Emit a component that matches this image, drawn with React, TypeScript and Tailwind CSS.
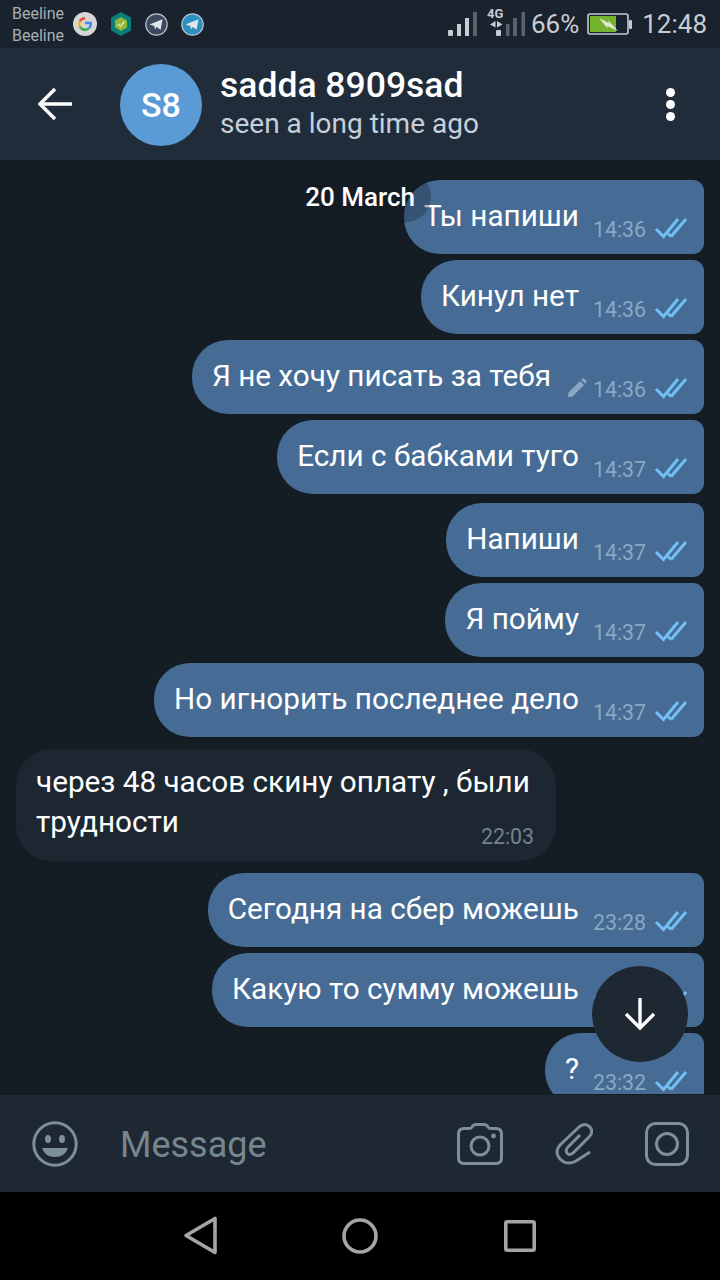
// App.tsx
import React from 'react';

const DoubleCheck = () => (
  <svg width="34" height="24" viewBox="0 0 34 24" fill="none" className="shrink-0">
    <path d="M2 14 L9.5 21.5 L24 4" stroke="#72c0f5" strokeWidth="3" />
    <path d="M17 21.5 L32 4" stroke="#72c0f5" strokeWidth="3" />
    <path d="M14 18.5 L17 21.5" stroke="#72c0f5" strokeWidth="3" />
  </svg>
);

const Pencil = () => (
  <svg width="20" height="20" viewBox="0 0 20 20" className="shrink-0">
    <path d="M1 19 L1.5 14.5 L13 3 L17 7 L5.5 18.5 Z M14.3 1.8 L15.4 0.8 Q16.3 0 17.2 0.8 L19.2 2.8 Q20 3.7 19.2 4.6 L18.2 5.7 Z" fill="#8ba7c4" />
  </svg>
);

const GoogleIcon = () => (
  <svg width="24" height="24" viewBox="0 0 24 24">
    <circle cx="12" cy="12" r="12" fill="#d6d6d4" />
    <path d="M12 6.2 A5.8 5.8 0 0 0 6.9 9.3" stroke="#e2483d" strokeWidth="2.4" fill="none" />
    <path d="M6.9 9.3 A5.8 5.8 0 0 0 6.9 14.7" stroke="#f2b705" strokeWidth="2.4" fill="none" />
    <path d="M6.9 14.7 A5.8 5.8 0 0 0 16.2 16" stroke="#3aa757" strokeWidth="2.4" fill="none" />
    <path d="M16.2 16 A5.8 5.8 0 0 0 17.8 11 H12" stroke="#4285f4" strokeWidth="2.4" fill="none" />
  </svg>
);

const ShieldIcon = () => (
  <svg width="22" height="24" viewBox="0 0 22 24">
    <path d="M11 0 L21 5.5 V18.5 L11 24 L1 18.5 V5.5 Z" fill="#0b7d78" />
    <path d="M11 5 L17 8.5 V15.5 L11 19 L5 15.5 V8.5 Z" fill="#8fb63c" />
    <path d="M8 12 L10.5 14.5 L14.5 9.5" stroke="#d8e6a0" strokeWidth="1.5" fill="none" />
  </svg>
);

const TelegramIcon = ({ fill }: { fill: string }) => (
  <svg width="23" height="23" viewBox="0 0 23 23">
    <circle cx="11.5" cy="11.5" r="10.7" fill={fill} stroke="#b9c5cf" strokeWidth="1.2" />
    <path d="M4.5 11.5 L17.5 6.2 L15.6 16.8 L11.6 14 L10 16.5 L9.3 13 Z" fill="#dfe5ea" />
  </svg>
);

const Signal = () => (
  <svg width="30" height="24" viewBox="0 0 30 24">
    <rect x="0" y="18" width="5" height="6" rx="1" fill="#c8ccd0" />
    <rect x="9" y="12" width="4" height="12" fill="#c8ccd0" />
    <rect x="17" y="6" width="4" height="18" fill="#c8ccd0" />
    <rect x="25" y="0" width="4" height="24" fill="#59636d" />
  </svg>
);

const Signal2 = () => (
  <svg width="38" height="32" viewBox="0 -4 38 32">
    <text x="0" y="10" fontFamily="Roboto, sans-serif" fontWeight="700" fontSize="13" fill="#c8ccd0">4G</text>
    <path d="M8.5 13 L3 16.5 L8.5 19.5 Z M10 13 V19.5 L15.5 16.5 Z" fill="#c8ccd0" />
    <rect x="9" y="22" width="5" height="6" rx="1" fill="#c8ccd0" />
    <rect x="19" y="16" width="3.5" height="12" fill="#59636d" />
    <rect x="26" y="10" width="4" height="18" fill="#59636d" />
    <rect x="34.5" y="4" width="3.5" height="24" fill="#59636d" />
  </svg>
);

const Battery = () => (
  <svg width="46" height="24" viewBox="0 0 46 24">
    <rect x="1" y="2" width="40" height="20" rx="2" fill="none" stroke="#c8ccd0" strokeWidth="1.6" />
    <rect x="3" y="4" width="26" height="16" fill="#74b32e" />
    <rect x="42" y="8" width="3" height="9" rx="1" fill="#c8ccd0" />
    <path d="M12 6 L22 11 L21 8 L31 19 L20 14 L21 17 Z" fill="#dfe5d5" />
  </svg>
);

interface Msg {
  text: string;
  time: string;
  top: string;
  edited?: boolean;
}

const messagesTop: Msg[] = [
  { text: 'Ты напиши', time: '14:36', top: 'mt-5' },
  { text: 'Кинул нет', time: '14:36', top: 'mt-[6px]' },
  { text: 'Я не хочу писать за тебя', time: '14:36', top: 'mt-[6px]', edited: true },
  { text: 'Если с бабками туго', time: '14:37', top: 'mt-[6px]' },
  { text: 'Напиши', time: '14:37', top: 'mt-[9px]' },
  { text: 'Я пойму', time: '14:37', top: 'mt-[6px]' },
  { text: 'Но игнорить последнее дело', time: '14:37', top: 'mt-[6px]' },
];

const messagesBottom: Msg[] = [
  { text: 'Сегодня на сбер можешь', time: '23:28', top: 'mt-3' },
  { text: 'Какую то сумму можешь', time: '23:29', top: 'mt-[6px]' },
  { text: '?', time: '23:32', top: 'mt-[6px]' },
];

const OutBubble = ({ msg }: { msg: Msg }) => (
  <div className={`flex justify-end mr-4 ${msg.top}`}>
    <div className="flex h-[74px] items-start rounded-l-[36px] rounded-r-[11px] bg-[#466c95] pl-5 pr-[16px]">
      <span className="mt-[16px] text-[29.7px] leading-[40px] text-white">{msg.text}</span>
      {msg.edited && (
        <span className="ml-4 mt-[38px]">
          <Pencil />
        </span>
      )}
      <span className={`mt-[35px] text-[21.3px] leading-[30px] text-[#8ba7c4] ${msg.edited ? 'ml-[6px]' : 'ml-[14px]'}`}>
        {msg.time}
      </span>
      <span className="ml-2 mt-[35px]">
        <DoubleCheck />
      </span>
    </div>
  </div>
);

export default function App() {
  return (
    <div className="flex h-[1280px] w-[720px] flex-col overflow-hidden bg-black font-['Roboto',sans-serif]">
      {/* Status bar */}
      <div className="flex h-12 shrink-0 items-center bg-[#19222d] pl-3 pr-[13px]">
        <div className="mt-[2px] w-[62px] text-[16px] leading-[22px] text-[#a9afb5]">
          <div>Beeline</div>
          <div>Beeline</div>
        </div>
        <div className="ml-[-1px] flex items-center">
          <GoogleIcon />
          <span className="ml-[13px]"><ShieldIcon /></span>
          <span className="ml-[13px]"><TelegramIcon fill="#3b4a5e" /></span>
          <span className="ml-[13px]"><TelegramIcon fill="#2b8fc0" /></span>
        </div>
        <div className="ml-auto flex items-center">
          <Signal />
          <span className="ml-[9px] mt-[-8px]"><Signal2 /></span>
          <span className="ml-[6px] text-[26px] text-[#c8ccd0]">66%</span>
          <span className="ml-2"><Battery /></span>
          <span className="ml-[9px] text-[26px] text-[#c8ccd0]">12:48</span>
        </div>
      </div>

      {/* Header */}
      <div className="flex h-[112px] shrink-0 items-center bg-[#202c3a]">
        <svg width="36" height="34" viewBox="0 0 36 34" fill="none" className="ml-[38px]">
          <path d="M34 17 H3 M17 2 L2 17 L17 32" stroke="#fff" strokeWidth="3.4" />
        </svg>
        <div className="ml-[46px] mt-[2px] flex h-[82px] w-[82px] items-center justify-center rounded-full bg-[#5a9bd5] text-[34px] font-medium text-white">
          S8
        </div>
        <div className="ml-[18px] flex-1">
          <div className="text-[35.5px] font-medium leading-[40px] text-white">sadda 8909sad</div>
          <div className="text-[28px] leading-[38px] text-[#c6d0da]">seen a long time ago</div>
        </div>
        <div className="mr-[45px] flex flex-col gap-[3px]">
          <span className="h-[9px] w-[9px] rounded-full bg-white" />
          <span className="h-[9px] w-[9px] rounded-full bg-white" />
          <span className="h-[9px] w-[9px] rounded-full bg-white" />
        </div>
      </div>

      {/* Chat */}
      <div className="relative min-h-0 flex-1 overflow-hidden bg-[#141c24]">
        {messagesTop.map((m, i) => (
          <OutBubble key={i} msg={m} />
        ))}

        <div className="ml-4 mt-3 h-[112px] w-[540px] rounded-[36px] bg-[#1c2732] pl-5 pr-[22px] pt-[13px]">
          <div className="whitespace-nowrap text-[29.7px] leading-[40px] text-white">через 48 часов скину оплату , были</div>
          <div className="flex justify-between">
            <span className="text-[29.7px] leading-[40px] text-white">трудности</span>
            <span className="mt-5 text-[21.3px] leading-[30px] text-[#75828e]">22:03</span>
          </div>
        </div>

        {messagesBottom.map((m, i) => (
          <OutBubble key={i} msg={m} />
        ))}

        {/* Date pill over the first bubble */}
        <div className="absolute right-[289px] top-[12px] flex h-[50px] items-center rounded-full bg-[#141c24]/30 pl-4 pr-4 text-[26px] font-medium text-white">
          20 March
        </div>

        {/* Scroll down */}
        <div className="absolute left-[592px] top-[806px] flex h-24 w-24 items-center justify-center rounded-full bg-[#1d2833]">
          <svg width="34" height="34" viewBox="0 0 34 34" fill="none">
            <path d="M17 1 V31 M3 17 L17 31 L31 17" stroke="#fff" strokeWidth="3.4" />
          </svg>
        </div>
      </div>

      {/* Input bar */}
      <div className="flex h-[98px] shrink-0 items-center border-t border-[#141c24] bg-[#1d2833]">
        <svg width="46" height="46" viewBox="0 0 46 46" className="ml-8 shrink-0">
          <circle cx="23" cy="23" r="21.2" fill="none" stroke="#7d8f9b" strokeWidth="3" />
          <ellipse cx="16" cy="18" rx="3" ry="4" fill="#7d8f9b" />
          <ellipse cx="30" cy="18" rx="3" ry="4" fill="#7d8f9b" />
          <path d="M10 27 H36 Q33 36 23 36 Q13 36 10 27 Z" fill="#7d8f9b" />
        </svg>
        <span className="ml-[42px] mt-[3px] flex-1 text-[36px] text-[#75868f]">Message</span>
        <svg width="46" height="42" viewBox="0 0 46 42" fill="none" className="shrink-0">
          <path d="M7 5.5 H12 Q14 5.5 15 4 Q16.5 1.5 19 1.5 H27 Q29.5 1.5 31 4 Q32 5.5 34 5.5 H39 Q44.5 5.5 44.5 11 V35 Q44.5 40.5 39 40.5 H7 Q1.5 40.5 1.5 35 V11 Q1.5 5.5 7 5.5 Z" stroke="#7d8f9b" strokeWidth="3" />
          <circle cx="23" cy="23" r="9" stroke="#7d8f9b" strokeWidth="3" />
          <circle cx="36.5" cy="13" r="2.4" fill="#7d8f9b" />
        </svg>
        <svg width="38" height="43" viewBox="0 0 38 43" fill="none" className="ml-[52px] shrink-0">
          <path d="M35 30 L21 39 Q12 44 5 37 Q-1 30 5 23 L24 5 Q30 0 35 5 Q39 10 34 15 L18 31 Q14 34 12 31 Q10 28 13 25 L25 13" stroke="#7d8f9b" strokeWidth="3" />
        </svg>
        <svg width="44" height="44" viewBox="0 0 44 44" fill="none" className="ml-[52px] mr-[31px] shrink-0">
          <rect x="1.5" y="1.5" width="41" height="41" rx="9" stroke="#7d8f9b" strokeWidth="3" />
          <circle cx="22" cy="22" r="10.5" stroke="#7d8f9b" strokeWidth="3" />
        </svg>
      </div>

      {/* Nav bar */}
      <div className="flex h-[88px] shrink-0 items-center bg-black">
        <svg width="36" height="40" viewBox="0 0 36 40" fill="none" className="ml-[183px]">
          <path d="M32 2.5 V36.5 L3 19.5 Z" stroke="#a5a5a5" strokeWidth="3.6" strokeLinejoin="round" />
        </svg>
        <svg width="36" height="36" viewBox="0 0 36 36" fill="none" className="ml-[123px]">
          <circle cx="18" cy="18" r="16" stroke="#a5a5a5" strokeWidth="3.6" />
        </svg>
        <svg width="32" height="32" viewBox="0 0 32 32" fill="none" className="ml-[126px]">
          <rect x="1.8" y="1.8" width="28.4" height="28.4" rx="1.5" stroke="#a5a5a5" strokeWidth="3.6" />
        </svg>
      </div>
    </div>
  );
}
